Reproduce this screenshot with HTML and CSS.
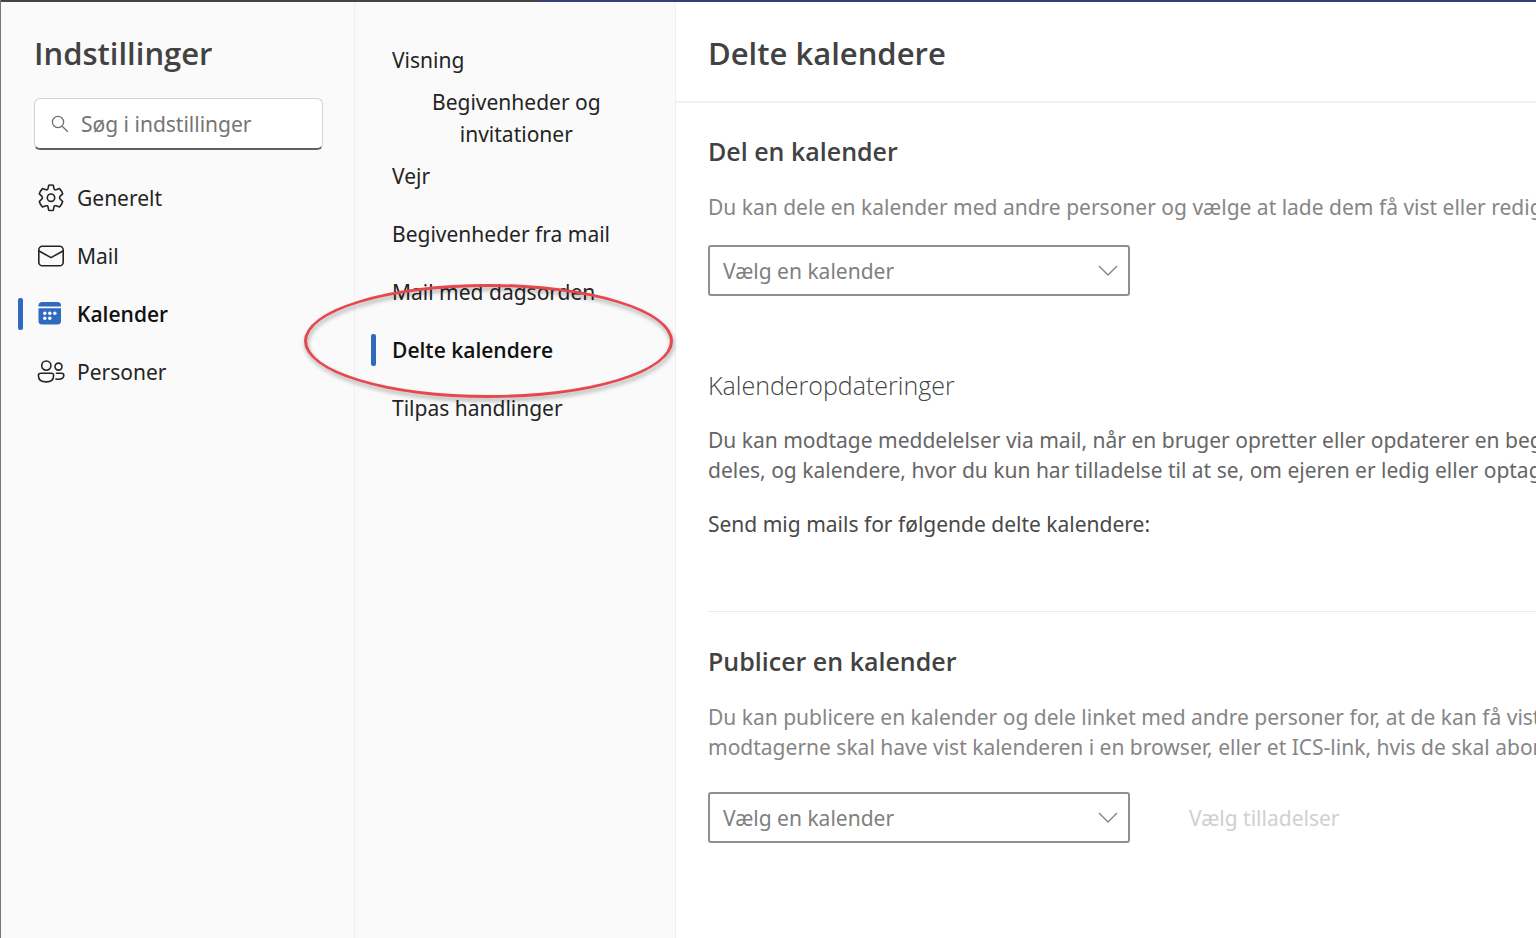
FILE: index.html
```html
<!DOCTYPE html>
<html lang="da">
<head>
    <meta charset="UTF-8">
    <meta name="viewport" content="width=device-width, initial-scale=1">
    <title>Indstillinger</title>
    <link rel="stylesheet" href="styles.css">
</head>
<body>
<div class="settings">
    <aside class="sidebar">
        <h1 class="title">Indstillinger</h1>
        <div class="search">
            <svg class="search-icon" viewBox="0 0 18 18" aria-hidden="true">
                <circle cx="7" cy="7" r="5.6"/>
                <path d="M11.2 11.2L16.8 16.8"/>
            </svg>
            <input class="search-input" type="text" placeholder="Søg i indstillinger" aria-label="Søg i indstillinger">
        </div>
        <nav>
            <ul class="menu">
                <li><a class="menu-link" href="#generelt">
                    <svg class="icon" viewBox="0 0 28 28" aria-hidden="true">
                        <path d="M11.7 1.3Q14 .7 16.3 1.3L17 4.6Q17.4 6.2 19.1 5.7L22.5 4.6Q24.9 7.1 25.7 9.9L23.2 12.2Q22 13.7 23.2 15.1L25.7 17.5Q24.9 20.5 22.5 22.9L19.1 21.8Q17.4 21.3 17 22.9L16.3 26.2Q14 26.8 11.7 26.2L11 22.9Q10.6 21.3 8.9 21.8L5.5 22.9Q3.1 20.5 2.3 17.5L4.8 15.1Q6 13.7 4.8 12.2L2.3 9.9Q3.1 7.1 5.5 4.6L8.9 5.7Q10.6 6.2 11 4.6Z"/>
                        <circle cx="14" cy="13.7" r="3.7"/>
                    </svg>
                    Generelt</a></li>
                <li><a class="menu-link" href="#mail">
                    <svg class="icon" viewBox="0 0 28 28" aria-hidden="true">
                        <rect x="1.8" y="4.2" width="24.4" height="19.6" rx="3.6"/>
                        <path d="M2 9L14 15.6L26 9"/>
                    </svg>
                    Mail</a></li>
                <li><a class="menu-link active" href="#kalender">
                    <svg class="icon icon-filled" viewBox="0 0 28 28" aria-hidden="true">
                        <path d="M1.5 6.5V5.5Q1.5 2 5 2H20.5Q24 2 24 5.5V6.5Z"/>
                        <path d="M1.5 8.2H24V21Q24 24.5 20.5 24.5H5Q1.5 24.5 1.5 21Z"/>
                        <g class="dots">
                            <circle cx="7.8" cy="13.3" r="1.7"/>
                            <circle cx="12.8" cy="13.3" r="1.7"/>
                            <circle cx="17.8" cy="13.3" r="1.7"/>
                            <circle cx="7.8" cy="18.2" r="1.7"/>
                            <circle cx="12.8" cy="18.2" r="1.7"/>
                        </g>
                    </svg>
                    Kalender</a></li>
                <li><a class="menu-link" href="#personer">
                    <svg class="icon" viewBox="0 0 28 28" aria-hidden="true">
                        <circle cx="9.3" cy="7.6" r="4.6"/>
                        <circle cx="21.5" cy="8.6" r="3.5"/>
                        <path d="M4 15.2H14.3Q16.6 15.2 16.6 17.4Q16.6 23.9 9.2 23.9Q1.4 23.9 1.4 17.4Q1.4 15.2 4 15.2Z"/>
                        <path d="M19.4 15.2H24.5Q26.8 15.2 26.8 17Q26.8 21.3 21.5 21.3Q20.2 21.3 19 20.9"/>
                    </svg>
                    Personer</a></li>
            </ul>
        </nav>
    </aside>

    <nav class="submenu">
        <ul class="menu">
            <li><a class="menu-link" href="#visning">Visning</a></li>
            <li><a class="menu-link two-line" href="#invitationer">Begivenheder og<br>invitationer</a></li>
            <li><a class="menu-link" href="#vejr">Vejr</a></li>
            <li><a class="menu-link" href="#begivenheder">Begivenheder fra mail</a></li>
            <li><a class="menu-link" href="#dagsorden">Mail med dagsorden</a></li>
            <li class="marked"><a class="menu-link active" href="#delte">Delte kalendere</a></li>
            <li><a class="menu-link" href="#handlinger">Tilpas handlinger</a></li>
        </ul>
    </nav>

    <main class="content">
        <header class="content-header">
            <h2 class="title">Delte kalendere</h2>
        </header>
        <section class="share">
            <h3 class="heading">Del en kalender</h3>
            <p class="text">Du kan dele en kalender med andre personer og vælge at lade dem få vist eller redigere</p>
            <div class="select-box">
                <select class="select" aria-label="Del en kalender">
                    <option>Vælg en kalender</option>
                </select>
                <svg class="chevron" viewBox="0 0 20 12" aria-hidden="true"><path d="M1 1L10 10L19 1"/></svg>
            </div>
        </section>
        <section class="updates">
            <h3 class="heading-light">Kalenderopdateringer</h3>
            <p class="text text-dark">Du kan modtage meddelelser via mail, når en bruger opretter eller opdaterer en begivenhed<br>deles, og kalendere, hvor du kun har tilladelse til at se, om ejeren er ledig eller optaget</p>
            <p class="text text-darker">Send mig mails for følgende delte kalendere:</p>
        </section>
        <section class="publish">
            <h3 class="heading">Publicer en kalender</h3>
            <p class="text">Du kan publicere en kalender og dele linket med andre personer for, at de kan få vist<br>modtagerne skal have vist kalenderen i en browser, eller et ICS-link, hvis de skal abonnere</p>
            <div class="select-row">
                <div class="select-box">
                    <select class="select" aria-label="Publicer en kalender">
                        <option>Vælg en kalender</option>
                    </select>
                    <svg class="chevron" viewBox="0 0 20 12" aria-hidden="true"><path d="M1 1L10 10L19 1"/></svg>
                </div>
                <select class="select select-disabled" aria-label="Tilladelser" disabled>
                    <option>Vælg tilladelser</option>
                </select>
            </div>
        </section>
    </main>
</div>
</body>
</html>
```
FILE: styles.css
```css
* {
    box-sizing: border-box;
}

body {
    margin: 0;
    font-family: "Noto Sans", "Open Sans", sans-serif;
    font-size: 21px;
    line-height: 30px;
    color: #242424;
    background: #fff;
}

h1, h2, h3, p, ul {
    margin: 0;
    padding: 0;
}

h1, h2, h3 {
    font-family: "Open Sans", sans-serif;
}

.settings {
    display: flex;
    min-height: 100vh;
    overflow: hidden;
    border-left: 1px solid #777;
    background: linear-gradient(to right, #444 35%, #2f4270 35%) top / 100% 2px no-repeat;
    padding-top: 2px;
}

.title {
    font-size: 31px;
    line-height: 44px;
    font-weight: 600;
    color: #424242;
}

/* Left column */
.sidebar {
    flex: 0 0 354px;
    min-width: 0;
    padding: 29px 31px 0 33px;
    background: #fafafa;
    border-right: 1px solid #f0f0f0;
}

.search {
    display: flex;
    align-items: center;
    height: 52px;
    margin: 23px 0 19px;
    padding: 0 16px;
    gap: 12px;
    background: #fff;
    border: 1px solid #d1d1d1;
    border-bottom: 2px solid #616161;
    border-radius: 6px;
}

.search-icon {
    flex: none;
    width: 18px;
    height: 18px;
    fill: none;
    stroke: #707070;
    stroke-width: 1.3;
}

.search-input {
    flex: 1;
    min-width: 0;
    width: 100%;
    padding: 0;
    border: 0;
    outline: 0;
    background: none;
    font: inherit;
}

.search-input::placeholder {
    color: #757575;
    opacity: 1;
}

.menu {
    list-style: none;
}

.menu-link {
    position: relative;
    display: flex;
    align-items: center;
    gap: 12px;
    height: 58px;
    padding-left: 3px;
    line-height: 32px;
    color: #242424;
    text-decoration: none;
}

.menu-link.active {
    font-family: "Open Sans", sans-serif;
    font-weight: 600;
    color: #111;
}

/* Blue bar next to the selected item */
.menu-link.active::before {
    content: "";
    position: absolute;
    left: -16px;
    width: 5px;
    height: 32px;
    border-radius: 2px;
    background: #2f6ac0;
}

.icon {
    width: 28px;
    height: 28px;
    fill: none;
    stroke: #242424;
    stroke-width: 1.6;
    stroke-linejoin: round;
    stroke-linecap: round;
}

.icon-filled {
    fill: #2f6ac0;
    stroke: none;
}

.dots {
    fill: #fff;
}

/* Second column */
.submenu {
    flex: 0 0 321px;
    padding: 29px 0 0 16px;
    background: #fafafa;
    border-right: 1px solid #f0f0f0;
}

.submenu .menu-link {
    padding-left: 21px;
}

.submenu .menu-link.active::before {
    left: 0;
}

.submenu .two-line {
    padding-left: 61px;
    text-align: center;
}

/* Red ring around the selected item */
.marked {
    position: relative;
}

.marked::after {
    content: "";
    position: absolute;
    z-index: 1;
    top: -37px;
    left: -67px;
    width: 363px;
    height: 108px;
    border: 3px solid #e5484d;
    border-radius: 50%;
    filter: drop-shadow(1px 3px 2px rgba(0, 0, 0, 0.35));
    pointer-events: none;
}

/* Content */
.content {
    flex: 1;
    min-width: 0;
    background: #fff;
}

.content-header {
    padding: 29px 32px 26px;
    border-bottom: 2px solid #f0f0f0;
}

.share, .updates, .publish {
    margin-left: 32px;
}

.share {
    padding-top: 32px;
}

.heading {
    font-size: 25px;
    line-height: 32px;
    font-weight: 600;
    color: #424242;
}

.heading-light {
    font-size: 25px;
    line-height: 32px;
    font-weight: 300;
    color: #444;
}

.text {
    margin-top: 24px;
    white-space: nowrap;
    color: #868686;
}

.heading + .text {
    margin-top: 25px;
}

.text-dark {
    color: #666;
}

.text-darker {
    color: #484848;
}

.select-box {
    position: relative;
    width: 422px;
    max-width: 100%;
}

.share .select-box {
    margin-top: 23px;
}

.select {
    display: block;
    width: 100%;
    height: 51px;
    padding: 0 13px;
    appearance: none;
    font: inherit;
    color: #808080;
    background: #fff;
    border: 2px solid #909090;
    border-radius: 3px;
}

.chevron {
    position: absolute;
    top: 20px;
    right: 12px;
    width: 20px;
    height: 12px;
    fill: none;
    stroke: #808080;
    stroke-width: 1.3;
    pointer-events: none;
}

.updates {
    padding: 73px 0 72px;
    border-bottom: 1px solid #ebebeb;
}

.publish {
    padding: 33px 0;
}

.select-row {
    display: flex;
    gap: 44px;
    margin-top: 30px;
}

.select-disabled {
    width: auto;
    border-color: transparent;
    color: #d0d0d0;
    opacity: 1;
}
```
